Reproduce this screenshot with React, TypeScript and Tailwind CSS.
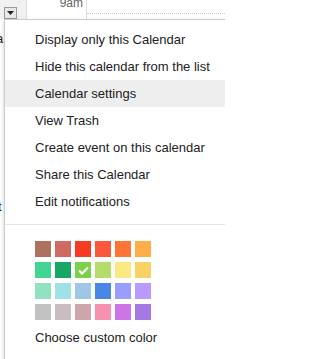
import React from "react";

const menuItems = [
  "Display only this Calendar",
  "Hide this calendar from the list",
  "Calendar settings",
  "View Trash",
  "Create event on this calendar",
  "Share this Calendar",
  "Edit notifications",
];

const colors = [
  ["#ac725e", "#d06b64", "#f83a22", "#fa573c", "#ff7537", "#ffad46"],
  ["#42d692", "#16a765", "#7bd148", "#b3dc6c", "#fbe983", "#fad165"],
  ["#92e1c0", "#9fe1e7", "#9fc6e7", "#4986e7", "#9a9cff", "#b99aff"],
  ["#c2c2c2", "#cabdbf", "#cca6ac", "#f691b2", "#cd74e6", "#a47ae2"],
];

const App = () => {
  return (
    <div
      className="relative w-[225px] h-[359px] overflow-hidden bg-white text-[#222]"
      style={{ fontFamily: '"Liberation Sans", Arial, sans-serif' }}
    >
      {/* background: calendar list row + grid header */}
      <div className="flex h-[19px]">
        <div className="w-[26px] h-full bg-[#f1f1f1] pl-[4px] pt-[7px]">
          <div className="w-[13px] h-[12px] border border-[#999] bg-[#e8e8e8] flex items-center justify-center">
            <svg width="7" height="4" viewBox="0 0 7 4">
              <path d="M0 0h7L3.5 4z" fill="#222" />
            </svg>
          </div>
        </div>
        <div className="w-px h-full bg-[#ddd]" />
        <div className="w-[59px] h-full relative">
          <span className="absolute right-[3px] -top-[6px] text-[12px] text-[#666]">9am</span>
        </div>
        <div className="w-px h-full bg-[#ddd]" />
        <div className="flex-1 pt-[13px]">
          <div className="border-t border-dotted border-[#ccc]" />
        </div>
      </div>
      <div className="w-[4px] overflow-hidden text-[13px] leading-[15px]">
        <div className="mt-[12px] -ml-[4px]">a</div>
        <div className="mt-[153px] -ml-[2px]">t</div>
      </div>

      {/* dropdown menu */}
      <div className="absolute left-[4px] top-[19px] w-[280px] h-[400px] bg-white border border-[#ccc] shadow-[0_2px_4px_rgba(0,0,0,0.2)] pt-[6px] text-[13px]">
        {menuItems.map((item, i) => (
          <div
            key={item}
            className={`pl-[30px] leading-[27px] h-[27px] whitespace-nowrap ${
              i === 2 ? "bg-[#eee]" : ""
            }`}
          >
            {item}
          </div>
        ))}
        <div className="mt-[9px] h-px bg-[#e5e5e5]" />
        <div className="pl-[30px] pt-[16px]">
          <div className="grid grid-cols-[repeat(6,16px)] gap-x-[4px] gap-y-[5px]">
            {colors.flat().map((c, i) => (
              <div
                key={c}
                className="w-[16px] h-[16px] flex items-center justify-center"
                style={{ backgroundColor: c }}
              >
                {i === 8 && (
                  <svg width="11" height="9" viewBox="0 0 11 9">
                    <path
                      d="M1 4.5l3 3L10 1.5"
                      fill="none"
                      stroke="#fff"
                      strokeWidth="2.2"
                    />
                  </svg>
                )}
              </div>
            ))}
          </div>
          <div className="mt-[4px] leading-[27px] whitespace-nowrap">Choose custom color</div>
        </div>
      </div>
    </div>
  );
};

export default App;
